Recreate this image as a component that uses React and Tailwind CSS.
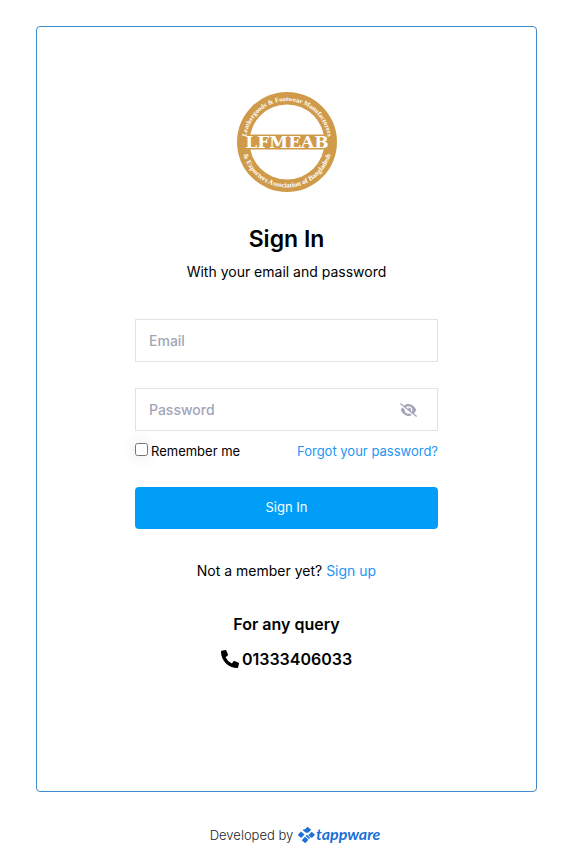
import { useState } from "react";
import { FaPhoneAlt } from "react-icons/fa";
import { FaEye, FaEyeSlash } from "react-icons/fa6";

function AssociationLogo() {
  return (
    <svg viewBox="0 0 100 100" className="size-[100px]" role="img" aria-label="LFMEAB">
      <defs>
        <path id="ring-top" d="M 9 50 A 41 41 0 0 1 91 50" />
        <path id="ring-bottom" d="M 4.5 50 A 45.5 45.5 0 0 0 95.5 50" />
      </defs>
      <circle cx="50" cy="50" r="50" fill="#cf9b4a" />
      <circle cx="50" cy="50" r="37.5" fill="#fff" />
      <rect x="5" y="42.5" width="90" height="15" fill="#cf9b4a" />
      <text x="50" y="56" textAnchor="middle" fontSize="17" fontWeight="700" fill="#fff" fontFamily="'DejaVu Serif', serif">
        LFMEAB
      </text>
      <g fill="#fff" fontFamily="'Liberation Serif', serif" fontWeight="700">
        <text textAnchor="middle" fontSize="6.6">
          <textPath href="#ring-top" startOffset="50%">Leathergoods &amp; Footwear Manufacturers</textPath>
        </text>
        <text textAnchor="middle" fontSize="7">
          <textPath href="#ring-bottom" startOffset="50%">&amp; Exporters Association of Bangladesh</textPath>
        </text>
      </g>
    </svg>
  );
}

function TappwareLogo() {
  return (
    <svg viewBox="0 0 86 22" className="h-[22px] w-[86px]" role="img" aria-label="tappware">
      <g fill="#1b6fd6">
        <path d="M10.6 2.8l3.6 2.9-3.3 3.3-3.6-2.9z" />
        <path d="M14.6 7.8l3.5 2.9-3.3 3.4-3.5-2.9z" />
        <path d="M4 7.6l3.5 2.9-3.3 3.4L.7 11z" />
        <path d="M8 12.8l3.5 2.9-3.3 3.5-3.5-2.9z" />
        <path d="M5.8 6.2L7 5.1l3.4 2.9-1.2 1.1zM8.6 11.9l1.2-1.1 3.5 3-1.2 1.1z" />
      </g>
      <text x="19" y="16" fontSize="16" fontWeight="700" fontStyle="italic" fill="#1b6fd6" fontFamily="Lato, sans-serif">
        tappware
      </text>
    </svg>
  );
}

const field =
  "block w-full border border-[#e1e3ea] bg-white px-[13px] py-[10px] text-sm leading-[21px] font-medium text-[#5e6278] outline-none placeholder:text-[#a1a5b7]";

export default function App() {
  const [visible, setVisible] = useState(false);
  const [email, setEmail] = useState("");
  const [password, setPassword] = useState("");
  const Eye = visible ? FaEye : FaEyeSlash;

  return (
    <div className="flex min-h-screen flex-col items-center bg-white px-9 pt-[26px] font-['Inter',sans-serif] text-black">
      <main className="flex w-full max-w-[501px] flex-col items-center rounded-[4px] border border-[#428bca] px-8 pt-[65px] pb-[120px] min-[500px]:px-[98px]">
        <AssociationLogo />
        <h1 className="mt-8 text-[23px] leading-[30px] font-semibold">Sign In</h1>
        <p className="mt-2 text-sm leading-5">With your email and password</p>

        <form className="mt-[37px] w-full" onSubmit={(e) => e.preventDefault()}>
          <input type="email" aria-label="Email" placeholder="Email" className={field} value={email} onChange={(e) => setEmail(e.target.value)} />
          <div className="relative mt-[26px]">
            <input
              type={visible ? "text" : "password"}
              aria-label="Password"
              placeholder="Password"
              className={field}
              value={password}
              onChange={(e) => setPassword(e.target.value)}
            />
            <button
              type="button"
              aria-label="Toggle password visibility"
              className="absolute inset-y-0 right-[21px] flex items-center text-[#a1a5b7]"
              onClick={() => setVisible(!visible)}
            >
              <Eye className="h-[14px] w-[17px]" />
            </button>
          </div>
          <div className="mt-2 flex items-center justify-between text-[13px] leading-6">
            <label className="flex items-center gap-[3px]">
              <input type="checkbox" className="mb-1 size-[13px] shadow-[0_0_16px_rgba(0,0,0,0.12)]" />
              Remember me
            </label>
            <a href="#forgot" className="text-[#2196f3]">Forgot your password?</a>
          </div>
          <button type="submit" className="mt-6 block h-[42px] w-full rounded-[4px] bg-[#009ef7] pb-[2px] text-[13px] leading-5 text-white">
            Sign In
          </button>
        </form>

        <p className="mt-8 text-sm leading-5">
          Not a member yet? <a href="#signup" className="text-[#2196f3]">Sign up</a>
        </p>
        <h2 className="mt-[31px] text-base leading-6 font-semibold">For any query</h2>
        <p className="mt-[11px] flex items-center gap-[3px] text-base leading-6 font-semibold">
          <FaPhoneAlt className="size-[18px]" />
          01333406033
        </p>
      </main>
      <footer className="mt-8 flex items-center gap-1 pl-5 text-[13px] leading-5 font-light text-[#212529]">
        Developed by
        <a href="#tappware"><TappwareLogo /></a>
      </footer>
    </div>
  );
}
